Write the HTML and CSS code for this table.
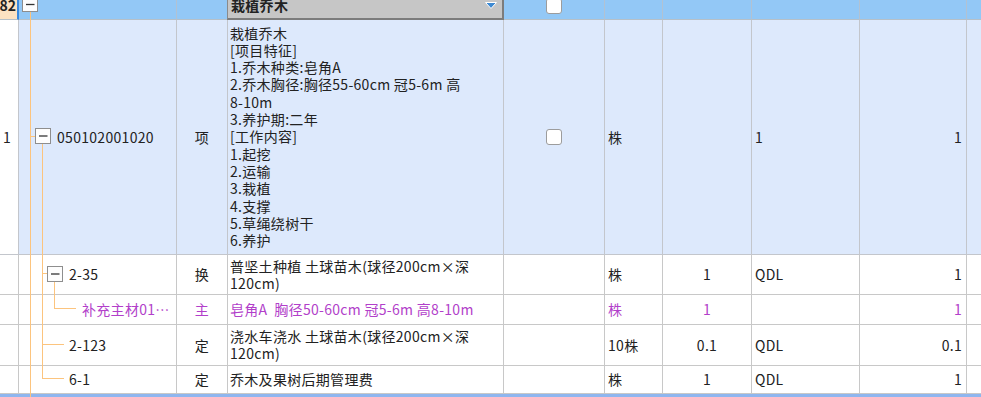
FILE: index.html
```html
<!DOCTYPE html>
<html lang="zh">
<head>
<meta charset="utf-8">
<link rel="stylesheet" href="styles.css">
</head>
<body>
<div class="sheet">
  <div class="row head">
    <div class="c c1 idx">82</div>
    <div class="c"></div>
    <div class="c"></div>
    <div class="c dd"><span class="dd-text">栽植乔木</span><svg class="dd-arrow" width="14" height="9" viewBox="0 0 14 9"><polygon points="1.5,1.5 12.5,1.5 7,7.5" fill="#3f8ad2" stroke="#ffffff" stroke-width="1"/></svg></div>
    <div class="c mid"><span class="chk"></span></div>
    <div class="c"></div>
    <div class="c"></div>
    <div class="c"></div>
    <div class="c"></div>
    <div class="c last"></div>
  </div>

  <div class="row r1">
    <div class="c c1 num">1</div>
    <div class="c code lv1">050102001020</div>
    <div class="c type">项</div>
    <div class="c name tall">
      <div>栽植乔木</div>
      <div>[项目特征]</div>
      <div>1.乔木种类:皂角A</div>
      <div>2.乔木胸径:胸径55-60cm 冠5-6m 高</div>
      <div>8-10m</div>
      <div>3.养护期:二年</div>
      <div>[工作内容]</div>
      <div>1.起挖</div>
      <div>2.运输</div>
      <div>3.栽植</div>
      <div>4.支撑</div>
      <div>5.草绳绕树干</div>
      <div>6.养护</div>
    </div>
    <div class="c mid"><span class="chk"></span></div>
    <div class="c unit">株</div>
    <div class="c qty"></div>
    <div class="c left">1</div>
    <div class="c right">1</div>
    <div class="c last"></div>
  </div>

  <div class="row r2">
    <div class="c c1"></div>
    <div class="c code lv2">2-35</div>
    <div class="c type">换</div>
    <div class="c name"><div>普坚土种植 土球苗木(球径200cm×深</div><div>120cm)</div></div>
    <div class="c"></div>
    <div class="c unit">株</div>
    <div class="c qty">1</div>
    <div class="c left">QDL</div>
    <div class="c right">1</div>
    <div class="c last"></div>
  </div>

  <div class="row r3 pur">
    <div class="c c1"></div>
    <div class="c code lv3">补充主材01…</div>
    <div class="c type">主</div>
    <div class="c name"><div>皂角A&nbsp;&nbsp;胸径50-60cm 冠5-6m 高8-10m</div></div>
    <div class="c"></div>
    <div class="c unit">株</div>
    <div class="c qty">1</div>
    <div class="c left"></div>
    <div class="c right">1</div>
    <div class="c last"></div>
  </div>

  <div class="row r4">
    <div class="c c1"></div>
    <div class="c code lv2">2-123</div>
    <div class="c type">定</div>
    <div class="c name"><div>浇水车浇水 土球苗木(球径200cm×深</div><div>120cm)</div></div>
    <div class="c"></div>
    <div class="c unit">10株</div>
    <div class="c qty">0.1</div>
    <div class="c left">QDL</div>
    <div class="c right">0.1</div>
    <div class="c last"></div>
  </div>

  <div class="row r5">
    <div class="c c1"></div>
    <div class="c code lv2">6-1</div>
    <div class="c type">定</div>
    <div class="c name"><div>乔木及果树后期管理费</div></div>
    <div class="c"></div>
    <div class="c unit">株</div>
    <div class="c qty">1</div>
    <div class="c left">QDL</div>
    <div class="c right">1</div>
    <div class="c last"></div>
  </div>

  <div class="foot"></div>
</div>

<svg class="tree" width="90" height="397" viewBox="0 0 90 397">
  <g stroke="#fcc47e" stroke-width="1" fill="none">
    <line x1="30.5" y1="12" x2="30.5" y2="397"/>
    <line x1="30" y1="136.5" x2="35" y2="136.5"/>
    <line x1="42.5" y1="144" x2="42.5" y2="379"/>
    <line x1="42" y1="273.5" x2="47" y2="273.5"/>
    <line x1="54.5" y1="282" x2="54.5" y2="308.5"/>
    <line x1="54" y1="308.5" x2="76" y2="308.5"/>
    <line x1="42" y1="344.5" x2="64" y2="344.5"/>
    <line x1="42" y1="378.5" x2="64" y2="378.5"/>
  </g>
  <g stroke="#8e8e8e" stroke-width="1" fill="#fdfdfd">
    <rect x="22.5" y="-3.5" width="15" height="15"/>
    <rect x="35.5" y="128.5" width="15" height="15"/>
    <rect x="47.5" y="266.5" width="15" height="15"/>
  </g>
  <g stroke="#333333" stroke-width="1.3">
    <line x1="26" y1="4.5" x2="34.5" y2="4.5"/>
    <line x1="39" y1="136" x2="47.5" y2="136"/>
    <line x1="51" y1="274" x2="59.5" y2="274"/>
  </g>
</svg>
</body>
</html>
```

FILE: styles.css
```css
body {
  margin: 0;
  width: 981px;
  height: 397px;
  overflow: hidden;
  position: relative;
  background: #ffffff;
  font-family: "Noto Sans CJK SC", "Noto Sans", sans-serif;
  font-size: 14px;
  line-height: 17px;
  letter-spacing: 0.3px;
  color: #222222;
}

.sheet {
  margin-top: -8px;
}

.row {
  display: grid;
  grid-template-columns: 19px 158px 51px 276px 101px 58px 89px 108px 107px 1fr;
}

.c {
  box-sizing: border-box;
  min-width: 0;
  border-right: 1px solid #c8c8c8;
  border-bottom: 1px solid #c8c8c8;
  display: flex;
  align-items: center;
  overflow: hidden;
  white-space: nowrap;
}

.c.last {
  border-right: none;
}

/* header (partially scrolled) row */
.head {
  height: 28px;
  background: #93c8f6;
}

.head .c {
  border-right-color: #b2c2d2;
  border-bottom-color: #b6c0c8;
}

.head .c1 {
  background: #fde2c2;
  border-right: 2px solid #3a8ae0;
  justify-content: flex-end;
  font-weight: bold;
  letter-spacing: 0;
  padding-right: 1px;
}

.dd {
  background: #c6c6c6;
  border-left: 1px solid #8a8a8a;
  margin-left: -1px;
  border-right: 2px solid #7c7c7c !important;
  border-bottom: 2px solid #7c7c7c !important;
  justify-content: space-between;
  padding: 0 4px 0 3px;
  font-weight: bold;
}

.dd-arrow {
  display: block;
}

.mid {
  justify-content: center;
}

.chk {
  display: block;
  width: 16px;
  height: 16px;
  box-sizing: border-box;
  border: 1px solid #9c9c9c;
  border-radius: 3px;
  background: #ffffff;
}

/* body rows */
.r1 {
  height: 235px;
  background: #dde9fc;
}

.r1 .c {
  border-color: #c3c6cc;
}

.r1 .c1 {
  background: #ffffff;
}

.r2 { height: 40px; }
.r3 { height: 30px; }
.r4 { height: 41px; }
.r5 { height: 28px; }

.pur {
  color: #b23fca;
}

.num {
  padding-left: 3px;
}

.code.lv1 { padding-left: 38px; }
.code.lv2 { padding-left: 50px; }
.code.lv3 { padding-left: 63px; }

.type {
  justify-content: center;
}

.name {
  flex-direction: column;
  align-items: flex-start;
  justify-content: center;
  padding-left: 2px;
}

.name.tall {
  line-height: 17.3px;
}

.unit {
  padding-left: 3px;
}

.qty {
  justify-content: center;
}

.left {
  padding-left: 3px;
}

.right {
  justify-content: flex-end;
  padding-right: 4px;
}

.foot {
  height: 12px;
  background: #8fb6ef;
}

.tree {
  position: absolute;
  left: 0;
  top: 0;
  pointer-events: none;
}
```
